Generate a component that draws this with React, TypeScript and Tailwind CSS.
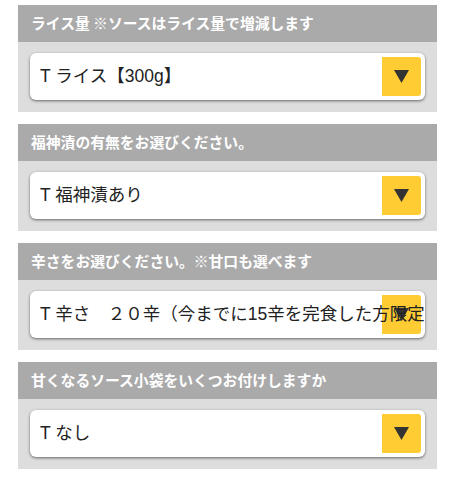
import React from "react";

const sections = [
  { label: "ライス量 ※ソースはライス量で増減します", value: "T ライス【300g】" },
  { label: "福神漬の有無をお選びください。", value: "T 福神漬あり" },
  { label: "辛さをお選びください。※甘口も選べます", value: "T 辛さ　２０辛（今までに15辛を完食した方限定）" },
  { label: "甘くなるソース小袋をいくつお付けしますか", value: "T なし" },
];

function Select({ value }: { value: string }) {
  return (
    <div className="relative h-[47px] rounded-[6px] bg-white shadow-[0_1px_3px_rgba(0,0,0,0.55)]">
      <div className="absolute top-[4px] right-[4px] bottom-[4px] w-[39px] rounded-r-[3px] bg-[#ffcc33] flex items-center justify-center">
        <svg width="15" height="13" viewBox="0 0 15 13">
          <polygon points="0,0 15,0 7.5,13" fill="#333333" />
        </svg>
      </div>
      <div className="relative z-10 h-full flex items-center pl-[10px] pr-[7px] overflow-hidden">
        <span
          className="whitespace-nowrap text-[17.5px] text-[#222] leading-none"
          style={{ fontFamily: '"Liberation Sans", "Noto Sans CJK JP", sans-serif' }}
        >
          {value}
        </span>
      </div>
    </div>
  );
}

export default function App() {
  return (
    <div
      className="w-[460px] h-[480px] bg-white pt-[5px] px-[18px] flex flex-col gap-[12px] overflow-hidden"
      style={{ fontFamily: '"Noto Sans CJK JP", "Noto Sans", sans-serif' }}
    >
      {sections.map((s, i) => (
        <div key={i} className="w-[419px] flex flex-col">
          <div className="h-[37px] bg-[#aaaaaa] flex items-center pl-[13px]">
            <span className="text-[14.8px] font-bold text-white leading-none whitespace-nowrap">{s.label}</span>
          </div>
          <div className="h-[70px] bg-[#dddddd] pt-[11px] px-[12px]">
            <Select value={s.value} />
          </div>
        </div>
      ))}
    </div>
  );
}
